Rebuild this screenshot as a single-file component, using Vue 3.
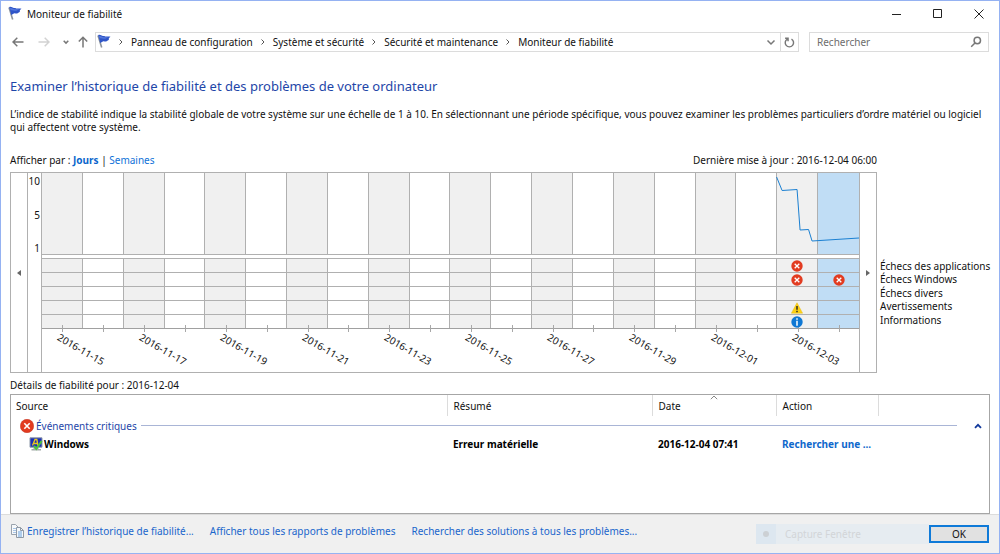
<script setup>
import { ref } from 'vue'

const crumbs = ['Panneau de configuration', 'Système et sécurité', 'Sécurité et maintenance', 'Moniteur de fiabilité']

const labels = ['2016-11-15', '2016-11-17', '2016-11-19', '2016-11-21', '2016-11-23', '2016-11-25', '2016-11-27', '2016-11-29', '2016-12-01', '2016-12-03']
const events = {
  18: ['error', 'error', null, 'warning', 'info'],
  19: [null, 'error', null, null, null],
}
const days = Array.from({ length: 20 }, (_, i) => ({
  id: i,
  label: i % 2 === 0 ? labels[i / 2] : '',
  events: events[i] || [null, null, null, null, null],
}))
const selected = ref(19)
const expanded = ref(true)
const legend = ['Échecs des applications', 'Échecs Windows', 'Échecs divers', 'Avertissements', 'Informations']
</script>

<template>
  <div class="window">
    <header class="titlebar">
      <svg class="flag" viewBox="0 0 16 16" aria-hidden="true">
        <path d="M2 1.500 5.700 13.500" stroke="#8c939c" stroke-width="1.600" />
        <path d="M2.200 1.200C4.200 0 5.500 2.400 7.500 2c1-.2 1.300.5 2.200.6 1.300.1 2.800-.3 4.800.1-1.600 1.200-2 2-1.600 3.200-1.300.1-1.700 1.400-3 1.600-1.200.2-1.700-.5-2.900-.1-1 .3-1.500.9-2.800 1.500z" fill="#2f55c8" />
        <path d="M3 2.200C5 1.600 6 3.500 8.200 3.200c1.600-.1 2.700-.1 4.300.1-2 .8-2.800 1.600-4.600 1.500C6.200 4.700 5.300 4 3.700 4.600z" fill="#5478dc" />
      </svg>
      <h1>Moniteur de fiabilité</h1>
      <div class="controls">
        <button type="button" aria-label="Réduire"><svg viewBox="0 0 10 10"><path d="M0 5.500h9" /></svg></button>
        <button type="button" aria-label="Agrandir"><svg viewBox="0 0 10 10"><path d="M.5.5h8v8h-8z" /></svg></button>
        <button type="button" aria-label="Fermer"><svg viewBox="0 0 10 10"><path d="M.5.5l9 9M9.500.5l-9 9" /></svg></button>
      </div>
    </header>

    <nav class="navbar" aria-label="Navigation">
      <button type="button" class="nav back" aria-label="Précédent">
        <svg viewBox="0 0 12 12"><path d="M11.500 6H1.200M5.300 1.700 1 6l4.300 4.300" /></svg>
      </button>
      <button type="button" class="nav forward" aria-label="Suivant" disabled>
        <svg viewBox="0 0 12 12"><path d="M.5 6h10.300M6.700 1.700 11 6l-4.300 4.300" /></svg>
      </button>
      <button type="button" class="nav recent" aria-label="Emplacements récents">
        <svg viewBox="0 0 12 12"><path d="M3.700 4.800 6 7.100l2.300-2.300" /></svg>
      </button>
      <button type="button" class="nav up" aria-label="Dossier parent">
        <svg viewBox="0 0 12 12"><path d="M6 11.500V1.500M1.800 5.500 6 1.200l4.200 4.300" /></svg>
      </button>
      <div class="address">
        <svg class="flag" viewBox="0 0 16 16" aria-hidden="true">
          <path d="M2 1.500 5.700 13.500" stroke="#8c939c" stroke-width="1.600" />
          <path d="M2.200 1.200C4.200 0 5.500 2.400 7.500 2c1-.2 1.300.5 2.200.6 1.300.1 2.800-.3 4.800.1-1.600 1.200-2 2-1.600 3.200-1.300.1-1.700 1.400-3 1.600-1.200.2-1.700-.5-2.900-.1-1 .3-1.500.9-2.800 1.500z" fill="#2f55c8" />
          <path d="M3 2.200C5 1.600 6 3.500 8.200 3.200c1.600-.1 2.700-.1 4.300.1-2 .8-2.800 1.600-4.600 1.500C6.200 4.700 5.300 4 3.700 4.600z" fill="#5478dc" />
        </svg>
        <ol class="crumbs">
          <li v-for="c in crumbs" :key="c">
            <svg viewBox="0 0 6 8" aria-hidden="true"><path d="M1.500 1.500 4 4 1.500 6.500" /></svg>
            <a href="#">{{ c }}</a>
          </li>
        </ol>
        <button type="button" class="drop" aria-label="Historique">
          <svg viewBox="0 0 10 10"><path d="M1.500 3.500 5 7l3.500-3.500" /></svg>
        </button>
        <button type="button" class="refresh" aria-label="Actualiser">
          <svg viewBox="0 0 10 10"><path d="M6.800 1.900A3.800 3.800 0 1 1 3 1.900M1 1.200h2.700v2.700" /></svg>
        </button>
      </div>
      <label class="search">
        <input type="search" placeholder="Rechercher" aria-label="Rechercher" />
        <svg viewBox="0 0 12 12" aria-hidden="true"><circle cx="7.300" cy="4.500" r="3.200" /><path d="M5 7 1.200 10.800" /></svg>
      </label>
    </nav>

    <main class="content">
      <h2>Examiner l’historique de fiabilité et des problèmes de votre ordinateur</h2>
      <p class="intro">L’indice de stabilité indique la stabilité globale de votre système sur une échelle de 1 à 10. En sélectionnant une période spécifique, vous pouvez examiner les problèmes particuliers d’ordre matériel ou logiciel qui affectent votre système.</p>

      <div class="viewline">
        <span>Afficher par : <a href="#" class="current">Jours</a> | <a href="#">Semaines</a></span>
        <span>Dernière mise à jour : 2016-12-04 06:00</span>
      </div>

      <section class="history">
        <div class="chart">
          <button type="button" class="scroll" aria-label="Jours précédents">
            <svg viewBox="0 0 6 8"><path d="M5 1v6L1 4z" /></svg>
          </button>
          <div class="axis"><span>10</span><span>5</span><span>1</span></div>
          <div class="plot">
            <div class="days">
              <div v-for="d in days" :key="d.id" class="day" :class="{ selected: d.id === selected }" @click="selected = d.id">
                <div class="index"></div>
                <div v-for="(e, r) in d.events" :key="r" class="event">
                  <svg v-if="e === 'error'" viewBox="0 0 12 12">
                    <circle cx="6" cy="6" r="5.700" fill="#e23b20" />
                    <path d="M3.700 3.700l4.600 4.600M8.300 3.700 3.700 8.300" stroke="#fff" stroke-width="1.300" />
                  </svg>
                  <svg v-else-if="e === 'warning'" viewBox="0 0 12 12">
                    <path d="M6 .8 11.600 11.200H.4z" fill="#fcd116" stroke="#e9bd12" stroke-width=".5" />
                    <path d="M6 4v3.800M6 8.800v1.400" stroke="#222" stroke-width="1.400" />
                  </svg>
                  <svg v-else-if="e === 'info'" viewBox="0 0 12 12">
                    <circle cx="6" cy="6" r="5.700" fill="#0f78d4" />
                    <path d="M6 2.200v1.500M6 4.700v5" stroke="#fff" stroke-width="1.500" />
                  </svg>
                </div>
                <div class="tick"></div>
                <div class="date"><span>{{ d.label }}</span></div>
              </div>
            </div>
            <svg class="trend" viewBox="0 0 818 82" preserveAspectRatio="none" aria-hidden="true">
              <path d="M735.500 4 741 17.500 756 16.500 759 57 767.500 56.500 771 68 818 65" />
            </svg>
          </div>
          <button type="button" class="scroll" aria-label="Jours suivants">
            <svg viewBox="0 0 6 8"><path d="M1 1v6l4-3z" /></svg>
          </button>
        </div>
        <ul class="legend">
          <li v-for="l in legend" :key="l">{{ l }}</li>
        </ul>
      </section>

      <h3>Détails de fiabilité pour : 2016-12-04</h3>
      <div class="details">
        <table>
          <colgroup>
            <col class="c-source" /><col class="c-summary" /><col class="c-date" /><col class="c-action" /><col />
          </colgroup>
          <thead>
            <tr>
              <th scope="col">Source</th>
              <th scope="col">Résumé</th>
              <th scope="col" class="sorted" aria-sort="ascending">
                Date
                <svg viewBox="0 0 8 5" aria-hidden="true"><path d="M.8 4.200 4 1l3.200 3.200" /></svg>
              </th>
              <th scope="col">Action</th>
              <td></td>
            </tr>
          </thead>
          <tbody>
            <tr>
              <td colspan="5" class="group">
                <div>
                  <svg class="critical" viewBox="0 0 14 14" aria-hidden="true">
                    <circle cx="7" cy="7" r="6.700" fill="#e23b20" stroke="#c02c18" stroke-width=".5" />
                    <path d="M4.300 4.300l5.400 5.400M9.700 4.300 4.300 9.700" stroke="#fff" stroke-width="1.600" />
                  </svg>
                  <span>Événements critiques</span>
                  <i></i>
                  <button type="button" aria-label="Réduire le groupe" :aria-expanded="expanded" @click="expanded = !expanded">
                    <svg viewBox="0 0 8 6"><path d="M1 4.800 4 1.800l3 3" /></svg>
                  </button>
                </div>
              </td>
            </tr>
            <tr v-if="expanded" class="item">
              <td>
                <div class="source">
                  <svg viewBox="0 0 14 14" aria-hidden="true">
                    <path d="M1 .8h12v9.400H1z" fill="#1b2fb5" stroke="#8d98a8" />
                    <path d="M4.500 10.500h5V12H12v1.500H2.500V12h2z" fill="#a2aaa8" />
                    <path d="M3.500 8.500 6 2.500h1.800L9 8.500M4.800 6.500h3.700" fill="none" stroke="#e8c81c" stroke-width="1.300" />
                    <path d="M5 8.800 7.300 11.800 12.700 4" fill="none" stroke="#4cc53c" stroke-width="2" />
                  </svg>
                  Windows
                </div>
              </td>
              <td>Erreur matérielle</td>
              <td>2016-12-04 07:41</td>
              <td><a href="#">Rechercher une ...</a></td>
              <td></td>
            </tr>
          </tbody>
        </table>
      </div>
    </main>

    <footer class="footer">
      <svg class="copy" viewBox="0 0 14 14" aria-hidden="true">
        <path d="M1.500.5h4l2.500 2.500v7.500H1.500z" fill="#f7f9fb" stroke="#9aa3ad" />
        <path d="M3 4.500h3M3 6.500h3M3 8.500h3" stroke="#a9c6e6" />
        <path d="M6.500 3.500h4L13.500 6.500v7h-7z" fill="#f4f8fc" stroke="#8f99a5" />
        <path d="M8 8h4M8 10h4M8 12h4" stroke="#6aa2dc" />
        <path d="M10.500 3.500v3h3" fill="none" stroke="#8f99a5" />
      </svg>
      <a href="#">Enregistrer l’historique de fiabilité...</a>
      <a href="#">Afficher tous les rapports de problèmes</a>
      <a href="#">Rechercher des solutions à tous les problèmes...</a>
      <div class="ghost"><span class="dot"></span><span class="name">Capture Fenêtre</span></div>
      <button type="button" class="ok">OK</button>
    </footer>
  </div>
</template>

<style>
body { margin: 0; background: #fff; }
</style>

<style scoped>
* { box-sizing: border-box; }
.window {
  display: flex;
  flex-direction: column;
  min-height: 100vh;
  border: 1px solid #95b2f2;
  background: #fff;
  color: #111;
  font: 10px/14px "Noto Sans", "Open Sans", sans-serif;
}
h1, h2, h3, p, ol, ul { margin: 0; padding: 0; font-size: inherit; font-weight: 400; list-style: none; }
a { color: #1a66cc; text-decoration: none; }
button { display: flex; align-items: center; justify-content: center; padding: 0; border: 0; background: none; font: inherit; color: inherit; }
svg { flex: none; display: block; fill: none; }
.flag { width: 16px; height: 16px; }

.titlebar { display: flex; align-items: center; height: 26px; padding-left: 6px; gap: 4px; }
.titlebar h1 { flex: 1; }
.controls { display: flex; height: 26px; }
.controls button { width: 41px; }
.controls svg { width: 10px; height: 10px; stroke: #222; }

.navbar { display: flex; align-items: center; height: 30px; padding: 0 10px 0 9px; }
.nav svg { width: 12px; height: 12px; stroke: #777; stroke-width: 1.500; }
.nav { width: 16px; }
.nav.forward { margin-left: 10px; }
.nav.forward svg { stroke: #d2d2d2; }
.nav.recent { margin-left: 6px; }
.nav.up { margin-left: 1px; }
.address { display: flex; align-items: center; flex: 1; height: 20px; margin-left: 4px; border: 1px solid #dcdcdc; }
.crumbs { display: flex; flex: 1; }
.crumbs li { display: flex; align-items: center; margin-left: 7px; gap: 7px; }
.crumbs li:first-child { margin-left: 6px; }
.crumbs a { color: #111; }
.crumbs svg { width: 6px; height: 8px; stroke: #555; }
.drop { width: 18px; height: 18px; }
.drop svg { width: 10px; height: 10px; stroke: #777; stroke-width: 1.500; }
.refresh { width: 18px; height: 18px; border-left: 1px solid #dcdcdc; }
.refresh svg { width: 11px; height: 11px; stroke: #777; stroke-width: 1.300; }
.search { display: flex; align-items: center; width: 180px; height: 20px; margin-left: 10px; padding: 0 6px 0 7px; border: 1px solid #dcdcdc; }
.search input { flex: 1; min-width: 0; padding: 0; border: 0; outline: 0; background: none; font: inherit; }
.search input::placeholder { color: #6d6d6d; opacity: 1; }
.search svg { width: 12px; height: 12px; stroke: #777; stroke-width: 1.500; }

.content { display: flex; flex: 1; flex-direction: column; padding: 19px 9px 0; }
h2 { color: #1e46a8; font-size: 13px; line-height: 20px; }
.intro { margin-top: 12px; padding-right: 6px; line-height: 13px; }
.viewline { display: flex; justify-content: space-between; margin: 19px 113px 0 0; line-height: 14px; }
.viewline a { color: #0f72d8; }
.viewline .current { font-weight: 700; color: #0a66cc; }

.history { display: flex; margin-top: 5px; }
.chart { display: flex; flex: 1; border: 1px solid #b0b0b0; }
.scroll { width: 16px; }
.scroll svg { width: 6px; height: 8px; fill: #666; }
.axis { display: flex; flex-direction: column; justify-content: space-between; width: 14px; height: 199px; padding: 1px 1px 117px 0; border-left: 1px solid #b0b0b0; text-align: right; }
.plot { position: relative; flex: 1; border: 1px solid #b0b0b0; border-width: 0 1px; }
.days { display: grid; grid-template-columns: repeat(20, minmax(0, 1fr)); }
.day { display: flex; flex-direction: column; }
.index { height: 82px; margin-bottom: 3px; border-bottom: 1px solid #b0b0b0; border-right: 1px solid #b0b0b0; }
.event { display: flex; align-items: center; justify-content: center; height: 14px; border-top: 1px solid #b0b0b0; border-right: 1px solid #b0b0b0; }
.day:last-child .index, .day:last-child .event { border-right: 0; }
.day:nth-child(odd) .index, .day:nth-child(odd) .event { background: #f0f0f0; }
.day.selected .index, .day.selected .event { background: #c0ddf5; }
.event svg { position: relative; z-index: 1; width: 12px; height: 12px; }
.tick { position: relative; height: 2px; border-top: 1px solid #a0a0a0; }
.tick::before { content: ""; position: absolute; top: -4px; left: 50%; width: 1px; height: 7px; background: #a8a8a8; }
.date { height: 42px; padding-left: 20px; }
.date span { display: block; white-space: nowrap; transform: rotate(30deg); transform-origin: 0 0; }
.trend { position: absolute; top: 0; left: 0; width: 100%; height: 82px; pointer-events: none; }
.trend path { stroke: #1b80d2; vector-effect: non-scaling-stroke; }
.legend { width: 113px; padding: 88px 0 0 3px; line-height: 13px; white-space: nowrap; }
.legend li { height: 13px; }
.legend li:nth-child(2n) { height: 14px; }

h3 { margin-top: 5px; line-height: 14px; }
.details { flex: 1; min-height: 119px; margin-top: 2px; border: 1px solid #a6a6a6; }
table { width: 100%; border-collapse: collapse; table-layout: fixed; }
.c-source { width: 436px; }
.c-summary { width: 205px; }
.c-date { width: 124px; }
.c-action { width: 102px; }
th, td { padding: 0 0 0 6px; text-align: left; font-weight: 400; white-space: nowrap; }
th:first-child { padding-left: 5px; }
thead th { height: 21px; border-right: 1px solid #dcdcdc; }
.sorted { position: relative; }
.sorted svg { position: absolute; top: 0; left: calc(50% - 4px); width: 8px; height: 5px; stroke: #888; }
td.group { padding: 0 7px 0 9px; }
.group div { display: flex; align-items: center; height: 19px; color: #1e46a8; }
.critical { width: 14px; height: 14px; margin-right: 2px; }
.group i { flex: 1; height: 1px; margin: 0 17px 0 4px; background: #a9b5d6; }
.group button { width: 8px; height: 12px; }
.group button svg { width: 8px; height: 6px; stroke: #123a9c; stroke-width: 1.800; }
.item td { height: 18px; font-weight: 700; color: #000; }
.item a { color: #0f68cc; }
.source { display: flex; align-items: center; gap: 1px; padding-left: 12px; }
.source svg { width: 14px; height: 14px; }

.footer { display: flex; align-items: center; height: 39px; padding: 0 10px 0 9px; border-top: 1px solid #dcdcdc; background: #f0f0f0; }
.copy { width: 14px; height: 14px; margin-right: 3px; }
.footer a { margin: 0 16px 6px 0; }
.copy { margin-bottom: 6px; }
.ghost { display: flex; align-items: center; width: 173px; height: 20px; margin-left: auto; background: #e6ecf1; color: #d2d5d8; }
.dot { display: flex; align-items: center; justify-content: center; width: 20px; height: 20px; background: #dde7f0; }
.dot::before { content: ""; width: 6px; height: 6px; border-radius: 50%; background: #ccd0d4; }
.name { margin-left: 9px; }
.ok { width: 60px; height: 18px; border: 2px solid #0f7ad8; background: #e1e1e1; }
</style>
